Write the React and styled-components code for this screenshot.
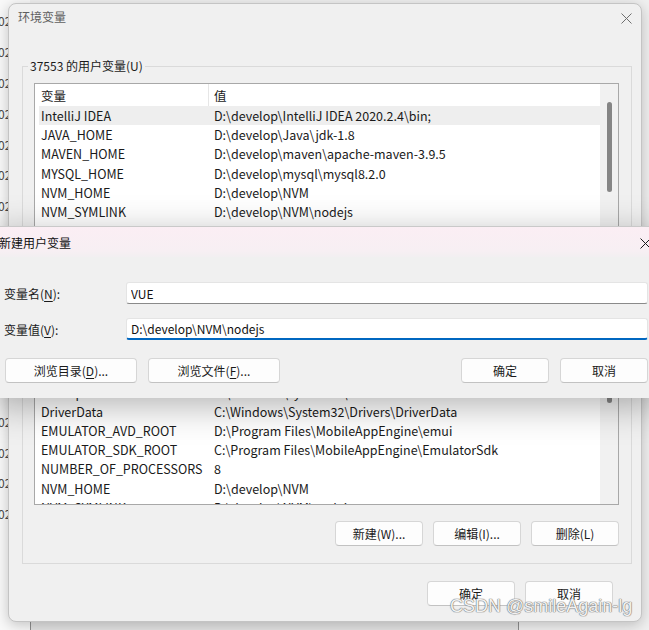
import React from 'react'
import { styled, createGlobalStyle } from 'styled-components'

const GlobalStyle = createGlobalStyle`
  * { box-sizing: border-box; }
  html, body { margin: 0; padding: 0; overflow: hidden; }
  body {
    font-family: "Noto Sans CJK SC", "Noto Sans", sans-serif;
    font-size: 12px;
    color: #1a1a1a;
  }
`

const userVars = [
  ['IntelliJ IDEA', 'D:\\develop\\IntelliJ IDEA 2020.2.4\\bin;'],
  ['JAVA_HOME', 'D:\\develop\\Java\\jdk-1.8'],
  ['MAVEN_HOME', 'D:\\develop\\maven\\apache-maven-3.9.5'],
  ['MYSQL_HOME', 'D:\\develop\\mysql\\mysql8.2.0'],
  ['NVM_HOME', 'D:\\develop\\NVM'],
  ['NVM_SYMLINK', 'D:\\develop\\NVM\\nodejs'],
  ['OneDrive', 'C:\\Users\\37553\\OneDrive'],
  ['OneDriveConsumer', 'C:\\Users\\37553\\OneDrive'],
  ['Path', 'D:\\develop\\IntelliJ IDEA 2020.2.4\\bin;'],
]

const systemVars = [
  ['ComSpec', 'C:\\Windows\\system32\\cmd.exe'],
  ['DriverData', 'C:\\Windows\\System32\\Drivers\\DriverData'],
  ['EMULATOR_AVD_ROOT', 'D:\\Program Files\\MobileAppEngine\\emui'],
  ['EMULATOR_SDK_ROOT', 'C:\\Program Files\\MobileAppEngine\\EmulatorSdk'],
  ['NUMBER_OF_PROCESSORS', '8'],
  ['NVM_HOME', 'D:\\develop\\NVM'],
  ['NVM_SYMLINK', 'D:\\develop\\NVM\\nodejs'],
]

const CloseIcon = ({ color = '#6e6e6e' }) => (
  <svg width="11" height="11" viewBox="0 0 11 11">
    <path d="M0.5 0.5 L10.5 10.5 M10.5 0.5 L0.5 10.5" stroke={color} strokeWidth="1" fill="none" />
  </svg>
)

const VarList = ({ rows, height, thumbTop, thumbHeight, selected }) => (
  <ListBox style={{ height }}>
    <Table>
      <HeaderRow>
        <NameCell $divider>变量</NameCell>
        <ValueCell>值</ValueCell>
      </HeaderRow>
      {rows.map(([name, value], i) => (
        <Row key={name + i} $selected={i === selected}>
          <NameCell>{name}</NameCell>
          <ValueCell>{value}</ValueCell>
        </Row>
      ))}
    </Table>
    <ScrollTrack>
      <Thumb style={{ top: thumbTop, height: thumbHeight }} />
    </ScrollTrack>
  </ListBox>
)

export default function App() {
  const dates = Array.from({ length: 17 })
  return (
    <Desktop>
      <GlobalStyle />
      <DateColumn>
        {dates.map((_, i) => (
          <DateCell key={i}>02</DateCell>
        ))}
      </DateColumn>
      <BackPanel />

      <Window>
        <TitleBar>
          <Title>环境变量</Title>
          <CloseIcon />
        </TitleBar>
        <Body>
          <Group $top={9}>
            <Legend>37553 的用户变量(U)</Legend>
            <VarList rows={userVars} height={183} thumbTop={18} thumbHeight={90} selected={0} />
            <ButtonRow>
              <Button $w={88}>新建(N)...</Button>
              <Button $w={88}>编辑(E)...</Button>
              <Button $w={88}>删除(D)</Button>
            </ButtonRow>
          </Group>
          <Group $gap={8.5}>
            <Legend>系统变量(S)</Legend>
            <VarList rows={systemVars} height={145} thumbTop={-30} thumbHeight={72} />
            <ButtonRow>
              <Button $w={88}>新建(W)...</Button>
              <Button $w={88}>编辑(I)...</Button>
              <Button $w={88}>删除(L)</Button>
            </ButtonRow>
          </Group>
          <Footer>
            <Button $w={88}>确定</Button>
            <Button $w={88}>取消</Button>
          </Footer>
        </Body>
      </Window>

      <Popup>
        <PopupTitleBar>
          <PopupTitle>新建用户变量</PopupTitle>
          <CloseIcon color="#1a1a1a" />
        </PopupTitleBar>
        <Form>
          <FieldRow>
            <Label>变量名(<u>N</u>):</Label>
            <Input readOnly value="VUE" />
          </FieldRow>
          <FieldRow>
            <Label>变量值(<u>V</u>):</Label>
            <Input readOnly value="D:\develop\NVM\nodejs" $focused />
          </FieldRow>
          <PopupButtons>
            <Button $w={132}>浏览目录(<u>D</u>)...</Button>
            <Button $w={132}>浏览文件(<u>F</u>)...</Button>
            <Spacer />
            <Button $w={88}>确定</Button>
            <Button $w={88}>取消</Button>
          </PopupButtons>
        </Form>
      </Popup>

      <Watermark>CSDN @smileAgain-lg</Watermark>
    </Desktop>
  )
}

const Desktop = styled.div`
  position: relative;
  width: 649px;
  height: 630px;
  overflow: hidden;
  background: #f0f0f0;
`

const DateColumn = styled.div`
  position: absolute;
  left: 0;
  top: 0;
  width: 30px;
  height: 630px;
  padding-top: 5.6px;
  background: #f9f9f9;
  display: flex;
  flex-direction: column;
`

const DateCell = styled.div`
  height: 30.8px;
  display: flex;
  align-items: center;
  margin-left: -2px;
  color: #4a4a4a;
  font-size: 12px;
`

const BackPanel = styled.div`
  position: absolute;
  left: 30px;
  top: 560px;
  width: 489px;
  height: 80px;
  background: #e3e3e3;
  border-left: 1px solid #8e8e8e;
  border-right: 1px solid #8e8e8e;
`

const Window = styled.div`
  position: absolute;
  left: 8px;
  top: 3px;
  width: 634px;
  height: 619px;
  background: #f0f0f0;
  border: 1px solid #c4c4c4;
  border-radius: 8px;
  box-shadow: 0 3px 14px rgba(0, 0, 0, 0.22);
  display: flex;
  flex-direction: column;
`

const TitleBar = styled.div`
  height: 25px;
  display: flex;
  align-items: center;
  justify-content: space-between;
  padding: 0 9px 0 9px;
  & > svg { margin-top: 3px; }
`

const Title = styled.span`
  color: #5f5f5f;
  font-size: 12px;
`

const Body = styled.div`
  padding: 0 9px 0 13px;
  display: flex;
  flex-direction: column;
`

const Group = styled.fieldset`
  margin: ${p => p.$gap ?? 29}px 0 0 0;
  padding: ${p => p.$top ?? 10}px 12px 17px 11px;
  border: 1px solid #dadada;
  min-width: 0;
`

const Legend = styled.legend`
  margin-left: -6px;
  padding: 0 2px;
  font-size: 12px;
  line-height: 16px;
  color: #1a1a1a;
`

const ListBox = styled.div`
  display: flex;
  background: #fff;
  border: 1px solid #a8a8a8;
  overflow: hidden;
`

const Table = styled.div`
  flex: 1;
  min-width: 0;
  padding-left: 4px;
  display: flex;
  flex-direction: column;
  font-size: 12.5px;
`

const HeaderRow = styled.div`
  height: 22px;
  flex-shrink: 0;
  display: flex;
  align-items: stretch;
`

const Row = styled.div`
  height: 19.2px;
  flex-shrink: 0;
  display: flex;
  align-items: center;
  background: ${p => (p.$selected ? '#eeeeee' : 'transparent')};
  white-space: nowrap;
`

const NameCell = styled.div`
  width: 170px;
  flex-shrink: 0;
  padding-left: 2px;
  display: flex;
  align-items: center;
  border-right: 1px solid ${p => (p.$divider ? '#e6e6e6' : 'transparent')};
`

const ValueCell = styled.div`
  padding-left: 5px;
  display: flex;
  align-items: center;
`

const ScrollTrack = styled.div`
  position: relative;
  width: 18px;
  flex-shrink: 0;
  background: #f1f1f1;
`

const Thumb = styled.div`
  position: absolute;
  left: 7px;
  width: 5px;
  border-radius: 3px;
  background: #868686;
`

const ButtonRow = styled.div`
  margin-top: 16px;
  display: flex;
  justify-content: flex-end;
  gap: 10px;
`

const Button = styled.div`
  width: ${p => p.$w}px;
  height: 25px;
  display: flex;
  align-items: center;
  justify-content: center;
  background: #fdfdfd;
  border: 1px solid #d6d6d6;
  border-bottom-color: #c2c2c2;
  border-radius: 4px;
  font-size: 12px;
  color: #1a1a1a;
  white-space: nowrap;
  & u { text-underline-offset: 2px; }
`

const Footer = styled.div`
  margin-top: 17px;
  padding-right: 19px;
  display: flex;
  justify-content: flex-end;
  gap: 10px;
`

const Popup = styled.div`
  position: absolute;
  left: -8px;
  top: 226px;
  width: 668px;
  height: 172px;
  background: #f0f0f0;
  border-top: 1px solid #c9c9c9;
  box-shadow: 0 8px 34px rgba(0, 0, 0, 0.3);
  z-index: 2;
  display: flex;
  flex-direction: column;
`

const PopupTitleBar = styled.div`
  height: 30px;
  flex-shrink: 0;
  display: flex;
  align-items: center;
  justify-content: space-between;
  padding: 0 9px 0 7px;
  background: linear-gradient(#fbeef4, #f7eff3 80%, #f2eff1);
  & > svg { margin-top: 2px; }
`

const PopupTitle = styled.span`
  font-size: 12px;
  color: #111;
`

const Form = styled.div`
  padding: 25px 12px 14px 12px;
  display: flex;
  flex-direction: column;
  gap: 14px;
`

const FieldRow = styled.div`
  display: flex;
  align-items: center;
`

const Label = styled.div`
  width: 122px;
  flex-shrink: 0;
  font-size: 12px;
  & u { text-underline-offset: 2px; }
`

const Input = styled.input`
  flex: 1;
  height: 22px;
  padding: 0 4px 0 4px;
  font-family: inherit;
  font-size: 12px;
  color: #111;
  background: #fff;
  border: 1px solid #e4e4e4;
  border-bottom: ${p => (p.$focused ? '2px solid #0067c0' : '1px solid #8a8a8a')};
  border-radius: 3px;
  outline: none;
`

const PopupButtons = styled.div`
  margin-top: 4px;
  padding-left: 1px;
  display: flex;
  gap: 11px;
`

const Spacer = styled.div`
  flex: 1;
`

const Watermark = styled.div`
  position: absolute;
  left: 450px;
  top: 596px;
  z-index: 3;
  font-family: "Liberation Sans", Arial, sans-serif;
  font-size: 18px;
  color: rgba(255, 255, 255, 0.92);
  text-shadow: 0 0 1px #777, 0 0 1px #777, 0 0 1px #777;
  white-space: nowrap;
`
